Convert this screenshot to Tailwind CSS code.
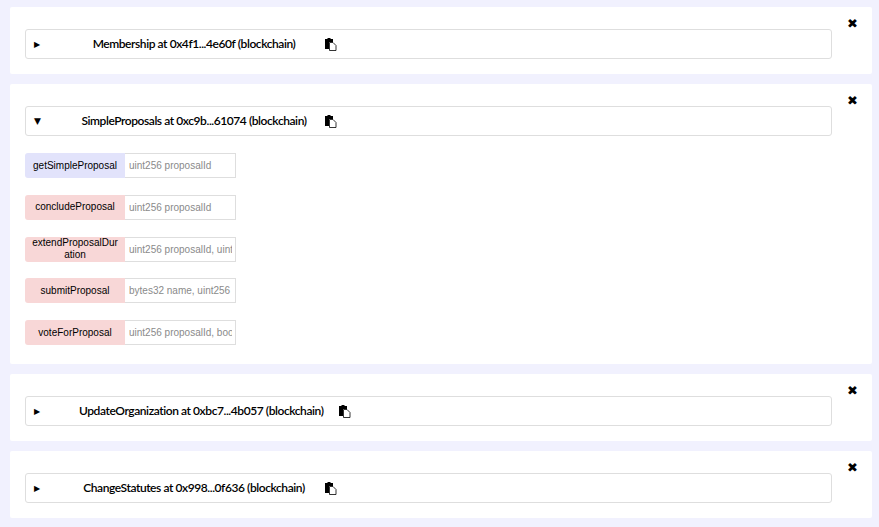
<!DOCTYPE html>
<html lang="en">

<head>
    <meta charset="UTF-8" />
    <meta name="viewport" content="width=device-width, initial-scale=1.0" />
    <title>Contracts</title>
    <script src="https://cdn.jsdelivr.net/npm/@tailwindcss/browser@4"></script>
</head>

<body class="bg-[#f1f1fe] font-['Lato',sans-serif] text-black overflow-hidden">
    <main class="pt-[7px] pl-[10px] pr-[7px] flex flex-col gap-[10px]">

        <!-- Membership -->
        <section class="relative bg-white rounded-[2px] pt-[22px] pb-[15px] pl-[15px] pr-[40px]">
            <span class="absolute top-[9px] right-[14px] text-[13px] leading-[16px] font-['DejaVu_Sans',sans-serif]">✖</span>
            <div class="h-[30px] border border-[#dedede] rounded-[3px] flex items-center pl-[8px]">
                <span class="w-[45px] mt-[1px] text-[8px] font-['DejaVu_Sans',sans-serif]">▶</span>
                <span class="min-w-[230px] text-center text-[12px] font-semibold tracking-[-0.425px] whitespace-nowrap">Membership at 0x4f1...4e60f (blockchain)</span>
                <svg class="ml-[16px] w-[12px] h-[13px]" viewBox="0 0 12 13">
                    <path fill="#000" d="M0 1h2.5V0h3v1H8v3H4v7H0z" />
                    <path fill="#fff" stroke="#000" stroke-width="0.8" d="M4.5 4.5h3.5l3 3v5H4.500z" />
                </svg>
            </div>
        </section>

        <!-- SimpleProposals -->
        <section class="relative bg-white rounded-[2px] pt-[22px] pb-[19px] pl-[15px] pr-[40px]">
            <span class="absolute top-[9px] right-[14px] text-[13px] leading-[16px] font-['DejaVu_Sans',sans-serif]">✖</span>
            <div class="h-[30px] border border-[#dedede] rounded-[3px] flex items-center pl-[8px]">
                <span class="w-[45px] mt-[1px] text-[9px] font-['DejaVu_Sans',sans-serif]">▼</span>
                <span class="min-w-[230px] text-center text-[12px] font-semibold tracking-[-0.425px] whitespace-nowrap">SimpleProposals at 0xc9b...61074 (blockchain)</span>
                <svg class="ml-[16px] w-[12px] h-[13px]" viewBox="0 0 12 13">
                    <path fill="#000" d="M0 1h2.5V0h3v1H8v3H4v7H0z" />
                    <path fill="#fff" stroke="#000" stroke-width="0.8" d="M4.5 4.5h3.5l3 3v5H4.500z" />
                </svg>
            </div>

            <div class="mt-[17px] flex flex-col gap-[16.75px] font-['Liberation_Sans',sans-serif] text-[10px]">
                <div class="flex h-[25px] w-[211px]">
                    <button class="w-[100px] px-[6px] bg-[#e2e3fb] rounded-l-[3px] leading-[12px] break-all">getSimpleProposal</button>
                    <input class="w-[111px] border border-l-0 border-[#dedede] pl-[4px] pr-[3px] placeholder:text-[#8a8a8a]" placeholder="uint256 proposalId" />
                </div>
                <div class="flex h-[25px] w-[211px]">
                    <button class="w-[100px] px-[6px] bg-[#f8d7d7] rounded-l-[3px] leading-[12px] break-all">concludeProposal</button>
                    <input class="w-[111px] border border-l-0 border-[#dedede] pl-[4px] pr-[3px] placeholder:text-[#8a8a8a]" placeholder="uint256 proposalId" />
                </div>
                <div class="flex h-[25px] w-[211px]">
                    <button class="w-[100px] px-[6px] bg-[#f8d7d7] rounded-l-[3px] leading-[12px] break-all">extendProposalDuration</button>
                    <input class="w-[111px] border border-l-0 border-[#dedede] pl-[4px] pr-[3px] placeholder:text-[#8a8a8a]" placeholder="uint256 proposalId, uint256 duration" />
                </div>
                <div class="flex h-[25px] w-[211px]">
                    <button class="w-[100px] px-[6px] bg-[#f8d7d7] rounded-l-[3px] leading-[12px] break-all">submitProposal</button>
                    <input class="w-[111px] border border-l-0 border-[#dedede] pl-[4px] pr-[3px] placeholder:text-[#8a8a8a]" placeholder="bytes32 name, uint256 duration" />
                </div>
                <div class="flex h-[25px] w-[211px]">
                    <button class="w-[100px] px-[6px] bg-[#f8d7d7] rounded-l-[3px] leading-[12px] break-all">voteForProposal</button>
                    <input class="w-[111px] border border-l-0 border-[#dedede] pl-[4px] pr-[3px] placeholder:text-[#8a8a8a]" placeholder="uint256 proposalId, bool support" />
                </div>
            </div>
        </section>

        <!-- UpdateOrganization -->
        <section class="relative bg-white rounded-[2px] pt-[22px] pb-[15px] pl-[15px] pr-[40px]">
            <span class="absolute top-[9px] right-[14px] text-[13px] leading-[16px] font-['DejaVu_Sans',sans-serif]">✖</span>
            <div class="h-[30px] border border-[#dedede] rounded-[3px] flex items-center pl-[8px]">
                <span class="w-[45px] mt-[1px] text-[8px] font-['DejaVu_Sans',sans-serif]">▶</span>
                <span class="min-w-[230px] text-center text-[12px] font-semibold tracking-[-0.425px] whitespace-nowrap">UpdateOrganization at 0xbc7...4b057 (blockchain)</span>
                <svg class="ml-[16px] w-[12px] h-[13px]" viewBox="0 0 12 13">
                    <path fill="#000" d="M0 1h2.5V0h3v1H8v3H4v7H0z" />
                    <path fill="#fff" stroke="#000" stroke-width="0.8" d="M4.5 4.5h3.5l3 3v5H4.500z" />
                </svg>
            </div>
        </section>

        <!-- ChangeStatutes -->
        <section class="relative bg-white rounded-[2px] pt-[22px] pb-[15px] pl-[15px] pr-[40px]">
            <span class="absolute top-[9px] right-[14px] text-[13px] leading-[16px] font-['DejaVu_Sans',sans-serif]">✖</span>
            <div class="h-[30px] border border-[#dedede] rounded-[3px] flex items-center pl-[8px]">
                <span class="w-[45px] mt-[1px] text-[8px] font-['DejaVu_Sans',sans-serif]">▶</span>
                <span class="min-w-[230px] text-center text-[12px] font-semibold tracking-[-0.425px] whitespace-nowrap">ChangeStatutes at 0x998...0f636 (blockchain)</span>
                <svg class="ml-[16px] w-[12px] h-[13px]" viewBox="0 0 12 13">
                    <path fill="#000" d="M0 1h2.5V0h3v1H8v3H4v7H0z" />
                    <path fill="#fff" stroke="#000" stroke-width="0.8" d="M4.5 4.5h3.5l3 3v5H4.500z" />
                </svg>
            </div>
        </section>

    </main>
</body>

</html>
